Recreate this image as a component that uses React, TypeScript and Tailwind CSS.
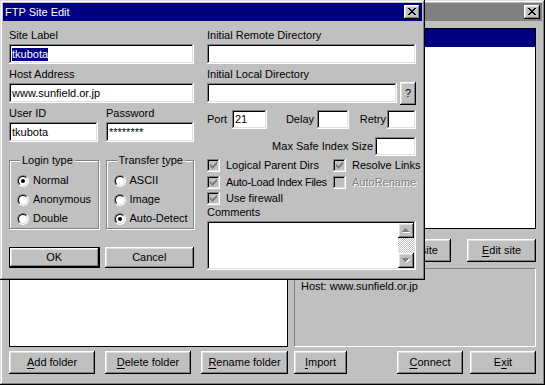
import React from 'react';

// Win98 bevels
const raised = 'shadow-[inset_-1px_-1px_#000,inset_1px_1px_#fff,inset_-2px_-2px_#808080,inset_2px_2px_#dfdfdf]';
const frame = 'shadow-[inset_-1px_-1px_#000,inset_1px_1px_#dfdfdf,inset_-2px_-2px_#808080,inset_2px_2px_#fff]';
const sunken = 'shadow-[inset_-1px_-1px_#fff,inset_1px_1px_#808080,inset_-2px_-2px_#dfdfdf,inset_2px_2px_#000]';

function U({ children }: { children: React.ReactNode }) {
  return <span className="underline decoration-1 underline-offset-[2px]">{children}</span>;
}

function Btn({ children, className = '' }: { children: React.ReactNode; className?: string }) {
  return (
    <div className={`flex items-center justify-center bg-[#c0c0c0] ${raised} ${className}`}>
      {children}
    </div>
  );
}

function CloseBtn() {
  return (
    <div className={`w-[16px] h-[14px] bg-[#c0c0c0] flex items-center justify-center ${raised}`}>
      <svg width="8" height="7" viewBox="0 0 8 7" shapeRendering="crispEdges" className="-mt-[1px]">
        <path
          fill="#000"
          d="M0 0h2v1H0zM6 0h2v1H6zM1 1h2v1H1zM5 1h2v1H5zM2 2h4v1H2zM3 3h2v1H3zM2 4h4v1H2zM1 5h2v1H1zM5 5h2v1H5zM0 6h2v1H0zM6 6h2v1H6z"
        />
      </svg>
    </div>
  );
}

function Field({ children, className = '' }: { children?: React.ReactNode; className?: string }) {
  return (
    <div className={`bg-white flex items-center pl-[3px] whitespace-nowrap overflow-hidden ${sunken} ${className}`}>
      {children}
    </div>
  );
}

function Radio({ label, checked }: { label: React.ReactNode; checked?: boolean }) {
  return (
    <div className="flex items-center h-[13px] gap-[4px]">
      <div className="w-[12px] h-[12px] rounded-full border border-t-[#808080] border-l-[#808080] border-r-white border-b-white">
        <div className="w-full h-full rounded-full border border-t-black border-l-black border-r-[#dfdfdf] border-b-[#dfdfdf] bg-white flex items-center justify-center">
          {checked && <div className="w-[4px] h-[4px] rounded-full bg-black" />}
        </div>
      </div>
      <span className="whitespace-nowrap">{label}</span>
    </div>
  );
}

function Check({ label, checked, disabled, tight }: { label: string; checked?: boolean; disabled?: boolean; tight?: boolean }) {
  return (
    <div className="flex items-center gap-[6px] whitespace-nowrap">
      <div className={`w-[13px] h-[13px] shrink-0 bg-[#c0c0c0] flex items-center justify-center ${sunken}`}>
        {checked && (
          <svg width="7" height="7" viewBox="0 0 7 7" shapeRendering="crispEdges">
            <path
              fill="#808080"
              d="M6 0h1v1H6zM5 1h2v1H5zM0 2h1v1H0zM4 2h3v1H4zM0 3h2v1H0zM3 3h3v1H3zM0 4h5v1H0zM1 5h3v1H1zM2 6h1v1H2z"
            />
          </svg>
        )}
      </div>
      <span
        className={`${disabled ? 'text-[#808080] [text-shadow:1px_1px_0_#fff]' : ''} ${tight ? 'tracking-[-0.3px]' : ''}`}
      >
        {label}
      </span>
    </div>
  );
}

function Arrow({ down }: { down?: boolean }) {
  return (
    <svg width="8" height="5" viewBox="0 0 8 5" shapeRendering="crispEdges">
      {down ? (
        <>
          <path fill="#fff" d="M1 1h7v1H1zM2 2h5v1H2zM3 3h3v1H3zM4 4h1v1H4z" />
          <path fill="#808080" d="M0 0h7v1H0zM1 1h5v1H1zM2 2h3v1H2zM3 3h1v1H3z" />
        </>
      ) : (
        <>
          <path fill="#fff" d="M4 1h1v1H4zM3 2h3v1H3zM2 3h5v1H2zM1 4h7v1H1z" />
          <path fill="#808080" d="M3 0h1v1H3zM2 1h3v1H2zM1 2h5v1H1zM0 3h7v1H0z" />
        </>
      )}
    </svg>
  );
}

function Group({ title, children, className = '' }: { title: React.ReactNode; children: React.ReactNode; className?: string }) {
  return (
    <fieldset className={`border border-[#808080] shadow-[1px_1px_0_#fff,inset_1px_1px_0_#fff] pt-[7px] pb-[3px] pl-[7px] ${className}`}>
      <legend className="ml-[3px] px-[2px] bg-[#c0c0c0] h-[13px] whitespace-nowrap">{title}</legend>
      <div className="flex flex-col gap-[6px]">{children}</div>
    </fieldset>
  );
}

function SiteDialog() {
  return (
    <div className={`absolute left-0 top-0 w-[425px] h-[280px] bg-[#c0c0c0] p-[3px] ${frame}`}>
      <div className="h-[18px] bg-[#000080] text-white flex items-center pl-[2px] pr-[2px]">
        <span className="flex-1">FTP Site Edit</span>
        <CloseBtn />
      </div>

      <div className="flex pt-[8px] pl-[6px] gap-[13px]">
        {/* left column */}
        <div className="w-[185px] flex flex-col">
          <div className="flex flex-col gap-[4px]">
            <div>
              <div className="h-[13px] mb-[2px]">Site Label</div>
              <Field className="h-[20px]">
                <span className="bg-[#000080] text-white">tkubota</span>
              </Field>
            </div>
            <div>
              <div className="h-[13px] mb-[2px]">Host Address</div>
              <Field className="h-[20px]">www.sunfield.or.jp</Field>
            </div>
            <div className="flex gap-[8px]">
              <div className="w-[89px]">
                <div className="h-[13px] mb-[2px]">User ID</div>
                <Field className="h-[20px]">tkubota</Field>
              </div>
              <div className="flex-1">
                <div className="h-[13px] mb-[2px]">Password</div>
                <Field className="h-[20px]">********</Field>
              </div>
            </div>
          </div>

          <div className="flex gap-[7px] mt-[12px]">
            <Group title="Login type" className="w-[90px]">
              <Radio label="Normal" checked />
              <Radio label="Anonymous" />
              <Radio label="Double" />
            </Group>
            <Group
              title={
                <>
                  Transfer <U>t</U>ype
                </>
              }
              className="w-[89px]"
            >
              <Radio label="ASCII" />
              <Radio label="Image" />
              <Radio label="Auto-Detect" checked />
            </Group>
          </div>

          <div className="flex gap-[5px] mt-[18px]">
            <div className="w-[91px] h-[21px] border border-black">
              <Btn className="w-full h-full">OK</Btn>
            </div>
            <Btn className="w-[90px] h-[21px]">Cancel</Btn>
          </div>
        </div>

        {/* right column */}
        <div className="w-[209px] flex flex-col">
          <div className="h-[13px] mb-[2px]">Initial Remote Directory</div>
          <Field className="h-[20px]" />
          <div className="h-[13px] mb-[2px] mt-[4px]">Initial Local Directory</div>
          <div className="h-[20px] flex items-center gap-[3px]">
            <Field className="h-[20px] flex-1" />
            <Btn className="w-[16px] h-[23px] shrink-0">?</Btn>
          </div>

          <div className="flex items-center h-[19px] mt-[7px]">
            <span className="w-[25px]">Port</span>
            <Field className="w-[35px] h-[19px]">21</Field>
            <span className="w-[50px] text-right pr-[3px]">Delay</span>
            <Field className="w-[32px] h-[19px]" />
            <span className="w-[38px] text-right pr-[1px]">Retry</span>
            <Field className="w-[29px] h-[19px]" />
          </div>

          <div className="flex items-center justify-end gap-[2px] h-[19px] mt-[8px]">
            <span>Max Safe Index Size</span>
            <Field className="w-[41px] h-[19px]" />
          </div>

          <div className="grid grid-cols-[126px_1fr] mt-[1px]">
            <div className="h-[17px] flex items-center"><Check label="Logical Parent Dirs" checked /></div>
            <div className="h-[17px] flex items-center"><Check label="Resolve Links" checked /></div>
            <div className="h-[16px] flex items-center"><Check label="Auto-Load Index Files" checked tight /></div>
            <div className="h-[16px] flex items-center"><Check label="AutoRename" disabled /></div>
            <div className="h-[16px] flex items-center"><Check label="Use firewall" checked /></div>
          </div>

          <div className="h-[13px] mb-[2px]">Comments</div>
          <div className={`h-[49px] bg-white p-[2px] flex justify-end ${sunken}`}>
            <div className="w-[16px] h-full flex flex-col">
              <Btn className="h-[15px] shrink-0"><Arrow /></Btn>
              <div className="flex-1 bg-[repeating-conic-gradient(#c0c0c0_0%_25%,#fff_0%_50%)] bg-[length:2px_2px]" />
              <Btn className="h-[15px] shrink-0"><Arrow down /></Btn>
            </div>
          </div>
        </div>
      </div>
    </div>
  );
}

export default function App() {
  return (
    <div className="w-[545px] h-[385px] overflow-hidden font-['Liberation_Sans',Arial,sans-serif] text-[11px] leading-[13px] text-black">
      <div className={`relative w-[545px] h-[385px] bg-[#c0c0c0] p-[3px] ${frame}`}>
        {/* background main window (mostly hidden by the dialog) */}
        <div className="h-[18px] bg-[#808080] flex items-center justify-end pr-[2px]">
          <CloseBtn />
        </div>

        <div className="pt-[7px] px-[6px]">
          <div className="flex gap-[6px] h-[319px]">
            <div className="w-[279px] bg-white border border-black" />
            <div className="flex-1 flex flex-col">
              <div className="h-[201px] bg-white border border-black">
                <div className="h-[18px] bg-[#000080]" />
              </div>
              <div className="flex justify-end gap-[16px] mt-[10px]">
                <Btn className="w-[66px] h-[23px]">
                  <U>A</U>dd site
                </Btn>
                <Btn className="w-[69px] h-[23px]">
                  <U>E</U>dit site
                </Btn>
              </div>
              <div className="h-[79px] mt-[6px] border border-t-[#808080] border-l-[#808080] border-r-white border-b-white pt-[11px] pl-[6px]">
                Host: www.sunfield.or.jp
              </div>
            </div>
          </div>

          <div className="flex mt-[4px] h-[23px]">
            <div className="w-[279px] flex gap-[10px]">
              <Btn className="w-[86px]">
                <U>A</U>dd folder
              </Btn>
              <Btn className="w-[86px]">
                <U>D</U>elete folder
              </Btn>
              <Btn className="w-[87px]">
                <U>R</U>ename folder
              </Btn>
            </div>
            <Btn className="w-[53px] ml-[6px]">
              <U>I</U>mport
            </Btn>
            <Btn className="w-[66px] ml-auto">
              <U>C</U>onnect
            </Btn>
            <Btn className="w-[66px] ml-[7px]">
              E<U>x</U>it
            </Btn>
          </div>
        </div>

        <SiteDialog />
      </div>
    </div>
  );
}
